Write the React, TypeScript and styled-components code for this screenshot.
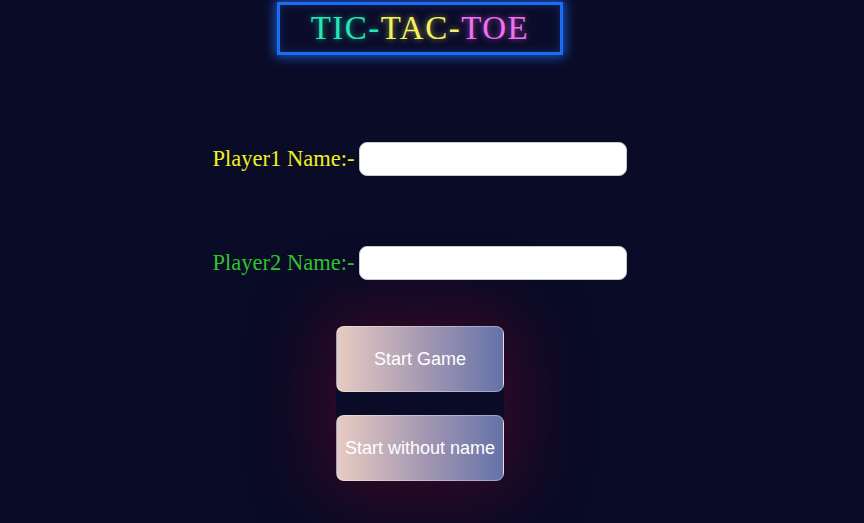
import React from 'react';
import styled, { createGlobalStyle } from 'styled-components';

const GlobalStyle = createGlobalStyle`
  html, body {
    margin: 0;
    padding: 0;
    background: #0a0b27;
    height: 100%;
  }
  body {
    font-family: "Liberation Serif", serif;
  }
`;

const Page = styled.div`
  width: 840px;
  display: flex;
  flex-direction: column;
  align-items: center;
  padding-top: 2px;
`;

const TitleBox = styled.h1`
  margin: 0;
  border: 3px solid #1b6df2;
  box-shadow: 0 0 10px 2px rgba(30, 110, 245, 0.75), inset 0 0 8px rgba(30, 110, 245, 0.3);
  padding: 5px 31px 5px 31px;
  font-family: "Liberation Serif", serif;
  font-weight: normal;
  font-size: 33px;
  line-height: 37px;
  letter-spacing: 1.5px;
  background: #0b0c2a;
`;

const Part = styled.span<{ $color: string }>`
  color: ${(p) => p.$color};
  text-shadow: 0 0 6px ${(p) => p.$color}99;
`;

const Form = styled.form`
  position: relative;
  z-index: 1;
  display: flex;
  flex-direction: column;
  align-items: center;
  margin-top: 87px;
  gap: 70px;
`;

const Row = styled.div`
  display: flex;
  align-items: center;
  gap: 5px;
`;

const Label = styled.label<{ $color: string }>`
  color: ${(p) => p.$color};
  font-size: 22.5px;
  font-family: "Liberation Serif", serif;
`;

const NameInput = styled.input`
  width: 268px;
  height: 34px;
  box-sizing: border-box;
  border: 1px solid #c8c8d0;
  border-radius: 8px;
  background: #fff;
  outline: none;
  padding: 0 8px;
  font-size: 16px;
`;

const Buttons = styled.div`
  display: flex;
  flex-direction: column;
  align-items: center;
  gap: 23px;
  margin-top: 46px;
  border-radius: 30px;
  box-shadow: 0 0 60px 25px rgba(80, 8, 35, 0.5);
`;

const StartButton = styled.button`
  width: 168px;
  height: 66px;
  border-radius: 8px;
  border: 1px solid rgba(255, 255, 255, 0.35);
  background: linear-gradient(to right, #e8cbc1, #a79ab3 50%, #6572a8);
  color: #fff;
  font-family: "Liberation Sans", Arial, sans-serif;
  font-size: 18px;
  padding: 0;
  cursor: pointer;
`;

export default function App() {
  return (
    <>
      <GlobalStyle />
      <Page>
        <TitleBox>
          <Part $color="#22e8b8">TIC-</Part>
          <Part $color="#f2f25e">TAC-</Part>
          <Part $color="#f070f2">TOE</Part>
        </TitleBox>
        <Form onSubmit={(e) => e.preventDefault()}>
          <Row>
            <Label $color="#f0f01e">Player1 Name:-</Label>
            <NameInput name="player1" />
          </Row>
          <Row>
            <Label $color="#2ec22e">Player2 Name:-</Label>
            <NameInput name="player2" />
          </Row>
        </Form>
        <Buttons>
          <StartButton type="button">Start Game</StartButton>
          <StartButton type="button">Start without name</StartButton>
        </Buttons>
      </Page>
    </>
  );
}
